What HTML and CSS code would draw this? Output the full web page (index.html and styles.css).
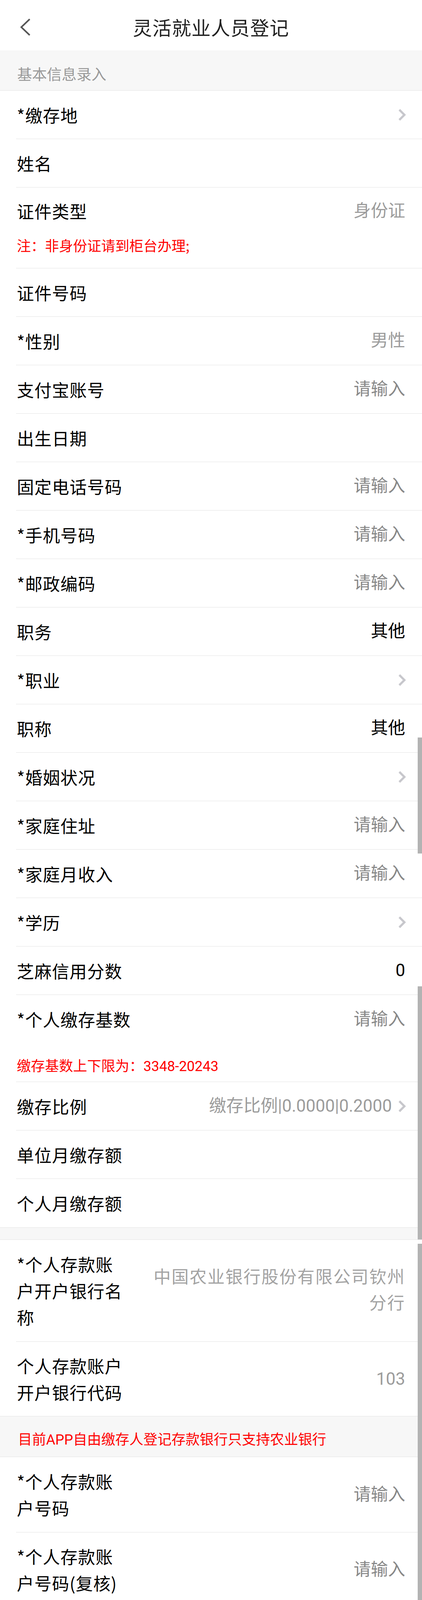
FILE: index.html
```html
<!DOCTYPE html>
<html lang="zh-CN">
<head>
<meta charset="utf-8">
<title>灵活就业人员登记</title>
<link rel="stylesheet" href="styles.css">
</head>
<body>
<div class="page">
  <header class="nav">
    <div class="nav-left">
      <svg class="back" width="28" height="45" viewBox="0 0 28 45"><polyline points="25,2 3.5,22.5 25,43" fill="none" stroke="#555" stroke-width="4"/></svg>
    </div>
    <div class="nav-title">灵活就业人员登记</div>
    <div class="nav-right"></div>
  </header>

  <div class="section-head">基本信息录入</div>

  <div class="group">
    <div class="row"><span class="label">*缴存地</span><span class="value"></span><svg class="chev" width="20" height="32" viewBox="0 0 20 32"><polyline points="3,3 16,16 3,29" fill="none" stroke="#c7c7cc" stroke-width="5.5"/></svg></div>
    <div class="row"><span class="label">姓名</span><span class="value"></span></div>
    <div class="row row-note row-note-a">
      <div class="row-main"><span class="label">证件类型</span><span class="value light">身份证</span></div>
      <div class="note">注：非身份证请到柜台办理;</div>
    </div>
    <div class="row"><span class="label">证件号码</span><span class="value"></span></div>
    <div class="row"><span class="label">*性别</span><span class="value light">男性</span></div>
    <div class="row"><span class="label">支付宝账号</span><span class="value hint">请输入</span></div>
    <div class="row"><span class="label">出生日期</span><span class="value"></span></div>
    <div class="row"><span class="label">固定电话号码</span><span class="value hint">请输入</span></div>
    <div class="row"><span class="label">*手机号码</span><span class="value hint">请输入</span></div>
    <div class="row"><span class="label">*邮政编码</span><span class="value hint">请输入</span></div>
    <div class="row"><span class="label">职务</span><span class="value dark">其他</span></div>
    <div class="row"><span class="label">*职业</span><span class="value"></span><svg class="chev" width="20" height="32" viewBox="0 0 20 32"><polyline points="3,3 16,16 3,29" fill="none" stroke="#c7c7cc" stroke-width="5.5"/></svg></div>
    <div class="row"><span class="label">职称</span><span class="value dark">其他</span></div>
    <div class="row"><span class="label">*婚姻状况</span><span class="value"></span><svg class="chev" width="20" height="32" viewBox="0 0 20 32"><polyline points="3,3 16,16 3,29" fill="none" stroke="#c7c7cc" stroke-width="5.5"/></svg></div>
    <div class="row"><span class="label">*家庭住址</span><span class="value hint">请输入</span></div>
    <div class="row"><span class="label">*家庭月收入</span><span class="value hint">请输入</span></div>
    <div class="row"><span class="label">*学历</span><span class="value"></span><svg class="chev" width="20" height="32" viewBox="0 0 20 32"><polyline points="3,3 16,16 3,29" fill="none" stroke="#c7c7cc" stroke-width="5.5"/></svg></div>
    <div class="row"><span class="label">芝麻信用分数</span><span class="value dark">0</span></div>
    <div class="row row-note row-note-b">
      <div class="row-main"><span class="label">*个人缴存基数</span><span class="value hint">请输入</span></div>
      <div class="note">缴存基数上下限为：3348-20243</div>
    </div>
    <div class="row"><span class="label">缴存比例</span><span class="value light">缴存比例|0.0000|0.2000</span><svg class="chev chev-gap" width="20" height="32" viewBox="0 0 20 32"><polyline points="3,3 16,16 3,29" fill="none" stroke="#c7c7cc" stroke-width="5.5"/></svg></div>
    <div class="row"><span class="label">单位月缴存额</span><span class="value"></span></div>
    <div class="row"><span class="label">个人月缴存额</span><span class="value"></span></div>
  </div>

  <div class="spacer"></div>

  <div class="group">
    <div class="row row-multi"><span class="label">*个人存款账户开户银行名称</span><span class="value bank">中国农业银行股份有限公司钦州分行</span></div>
    <div class="row row-multi row-tight"><span class="label">个人存款账户开户银行代码</span><span class="value light">103</span></div>
  </div>

  <div class="tip">目前APP自由缴存人登记存款银行只支持农业银行</div>

  <div class="group">
    <div class="row row-multi"><span class="label">*个人存款账户号码</span><span class="value hint">请输入</span></div>
    <div class="row row-multi row-tight"><span class="label">*个人存款账户号码(复核)</span><span class="value hint">请输入</span></div>
  </div>

  <div class="footer">
    <button class="btn" type="button">下一步</button>
  </div>
  <div class="bottom-bar"></div>

  <div class="scroll scroll-a"></div>
  <div class="scroll scroll-b"></div>
  <div class="scroll scroll-c"></div>
</div>
</body>
</html>
```

FILE: styles.css
```css
* { box-sizing: border-box; }
html, body { margin: 0; padding: 0; }
body {
  width: 1080px;
  background: #f7f7f7;
  font-family: Roboto, "Noto Sans CJK SC", sans-serif;
  color: #000;
}
.page {
  position: relative;
  width: 1080px;
  background: #f7f7f7;
}

/* nav */
.nav {
  height: 129px;
  background: #fff;
  display: grid;
  grid-template-columns: 1fr auto 1fr;
}
.nav-left { padding-left: 51px; padding-top: 47px; }
.back { display: block; }
.nav-title {
  font-family: "Noto Sans CJK SC", sans-serif;
  font-size: 49px;
  letter-spacing: 1px;
  color: #222;
  line-height: 129px;
  padding-top: 4px;
}

/* section header */
.section-head {
  height: 103px;
  padding: 36px 0 0 44px;
  font-family: "Noto Sans CJK SC", sans-serif;
  font-size: 38px;
  line-height: 46px;
  color: #999;
  border-bottom: 1px solid #e3e3e3;
}

.group {
  background: #fff;
  border-bottom: 1px solid #e3e3e3;
}

.row {
  margin-left: 41px;
  padding: 0 43px 0 2px;
  height: 124px;
  display: flex;
  align-items: center;
  border-bottom: 1px solid #e3e3e3;
}
.group > .row:last-child { border-bottom: none; }

.label {
  flex: 0 0 auto;
  font-family: "Noto Sans CJK SC", sans-serif;
  font-size: 44px;
  letter-spacing: 1px;
  line-height: 68px;
  color: #000;
}
.value {
  flex: 1 1 auto;
  margin-left: 30px;
  text-align: right;
  font-size: 44px;
  line-height: 67px;
  min-width: 0;
}
.hint { color: #888; }
.light { color: #9c9c9c; }
.dark { color: #000; }
.bank { color: #a3a3a3; letter-spacing: 2px; }

.chev { flex: 0 0 auto; display: block; margin-right: -2px; }
.chev-gap { margin-left: 16px; }

/* rows with a note under them */
.row-note {
  display: block;
}
.row-main {
  display: flex;
  align-items: center;
}
.note {
  font-size: 36px;
  line-height: 46px;
  color: #ff0000;
}
.row-note-a { height: 207px; }
.row-note-a .row-main { height: 120px; }
.row-note-a .note { margin-top: 4px; font-family: "Noto Sans CJK SC", sans-serif; }
.row-note-b { height: 223px; }
.row-note-b .row-main { height: 124px; }
.row-note-b .note { margin-top: 36px; }

/* multi line rows */
.row-multi {
  height: auto;
  padding-top: 28px;
  padding-bottom: 28px;
}
.row-multi .label {
  flex: 0 0 285px;
  width: 285px;
}
.row-tight { padding-top: 27px; padding-bottom: 27px; }

.spacer {
  height: 31px;
  background: #f7f7f7;
  border-bottom: 1px solid #e3e3e3;
}

.tip {
  height: 104px;
  padding: 37px 0 0 46px;
  font-size: 36px;
  line-height: 46px;
  color: #ff0000;
  background: #f7f7f7;
  border-bottom: 1px solid #e3e3e3;
}

.footer {
  height: 406px;
  padding: 141px 41px 0 41px;
}
.btn {
  display: block;
  width: 100%;
  height: 125px;
  border: 1px solid #179b16;
  border-radius: 12px;
  background: #1aad19;
  color: #fff;
  font-family: "Noto Sans CJK SC", sans-serif;
  font-size: 44px;
  letter-spacing: 2px;
  padding: 0;
}
.bottom-bar {
  height: 5px;
  background: #000;
}

/* scroll indicators overlay */
.scroll {
  position: absolute;
  right: 0;
  width: 11px;
  background: #b3b3b3;
}
.scroll-a { top: 1888px; height: 297px; }
.scroll-b { top: 2525px; height: 648px; }
.scroll-c { top: 3184px; height: 1336px; }
```
